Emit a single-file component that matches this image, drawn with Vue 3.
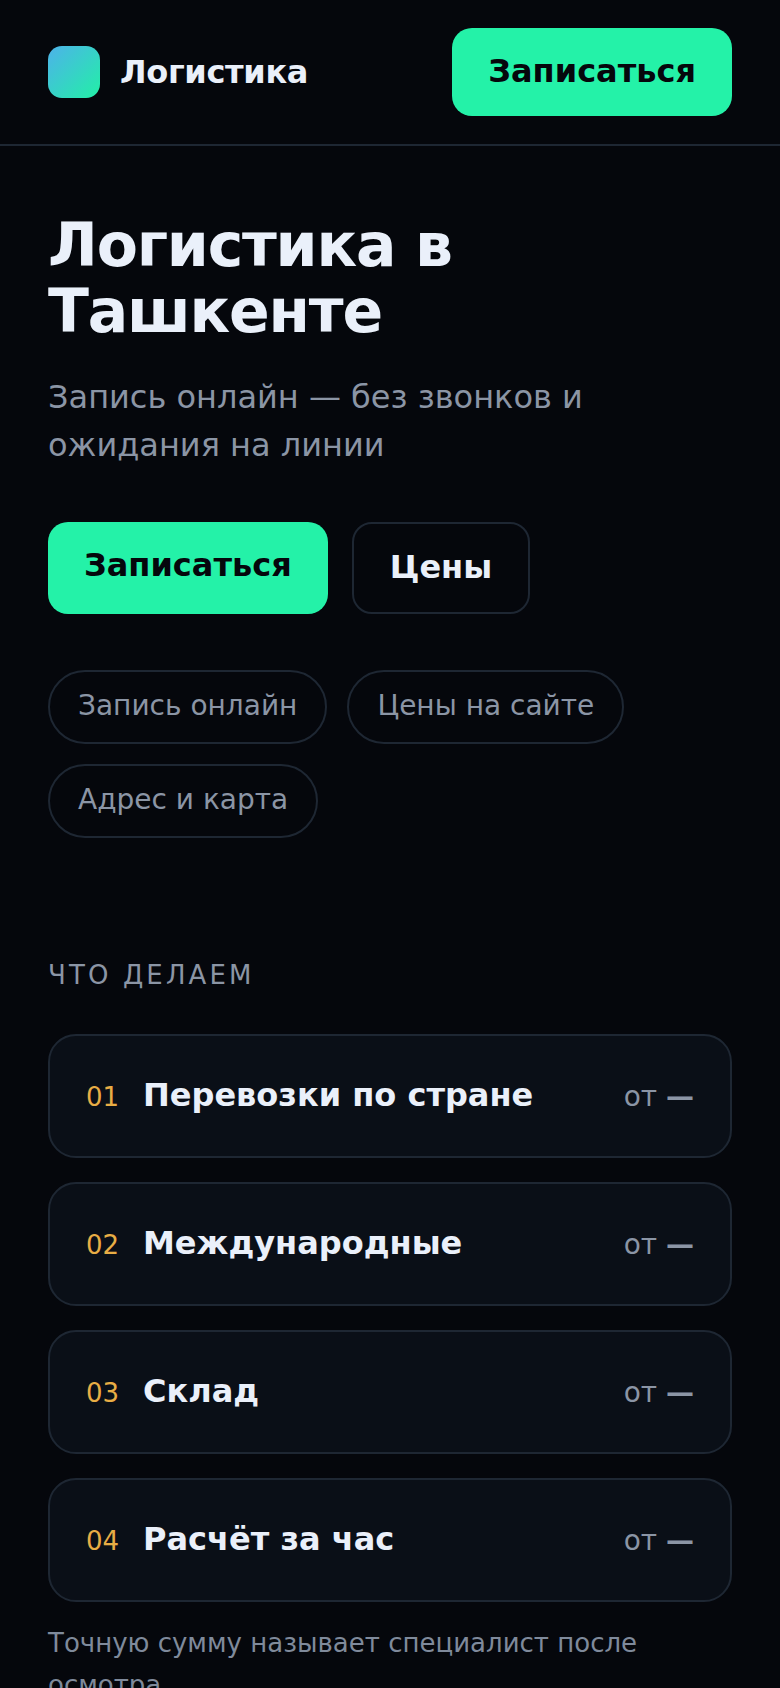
<script setup>
const chips = ["Запись онлайн", "Цены на сайте", "Адрес и карта"];
const services = [
  { num: "01", name: "Перевозки по стране" },
  { num: "02", name: "Международные" },
  { num: "03", name: "Склад" },
  { num: "04", name: "Расчёт за час" },
];
</script>

<template>
  <div class="page">
    <header class="top">
      <div class="brand">
        <span class="logo"></span>
        <span class="brand-name">Логистика</span>
      </div>
      <a class="btn primary">Записаться</a>
    </header>

    <section class="hero">
      <h1>Логистика в Ташкенте</h1>
      <p class="lead">Запись онлайн — без звонков и ожидания на линии</p>
      <div class="actions">
        <a class="btn primary">Записаться</a>
        <a class="btn ghost">Цены</a>
      </div>
      <div class="chips">
        <span v-for="c in chips" :key="c" class="chip">{{ c }}</span>
      </div>
    </section>

    <section class="services">
      <h2>ЧТО ДЕЛАЕМ</h2>
      <div class="list">
        <div v-for="s in services" :key="s.num" class="row">
          <span class="num">{{ s.num }}</span>
          <span class="name">{{ s.name }}</span>
          <span class="price">от <b>—</b></span>
        </div>
      </div>
      <p class="note">Точную сумму называет специалист после осмотра</p>
    </section>
  </div>
</template>

<style>
html,
body {
  margin: 0;
  background: #05070c;
}
</style>

<style scoped>
.page {
  width: 780px;
  height: 1688px;
  overflow: hidden;
  background: #05070c;
  color: #eaf0fa;
  font-family: "DejaVu Sans", sans-serif;
}
.top {
  display: flex;
  align-items: center;
  justify-content: space-between;
  height: 146px;
  padding: 0 48px;
  box-sizing: border-box;
  border-bottom: 2px solid #1e2733;
}
.brand {
  display: flex;
  align-items: center;
  gap: 20px;
}
.logo {
  width: 52px;
  height: 52px;
  border-radius: 14px;
  background: linear-gradient(135deg, #4db2ea, #22f0a6);
}
.brand-name {
  font-size: 32px;
  font-weight: 700;
  letter-spacing: -0.32px;
}
.btn {
  display: block;
  padding: 24px 36px 26px;
  border-radius: 20px;
  font-size: 32px;
  line-height: 38px;
  font-weight: 700;
}
.primary {
  background: #24f2a8;
  color: #05070c;
}
.ghost {
  border: 2px solid #1e2733;
  color: #eaf0fa;
}
.hero {
  padding: 66px 48px 0;
}
h1 {
  margin: 0;
  font-size: 60px;
  line-height: 66px;
  font-weight: 700;
  letter-spacing: -1.2px;
}
.lead {
  margin: 29px 0 0;
  font-size: 32px;
  line-height: 48px;
  color: #8b95a5;
}
.actions {
  display: flex;
  gap: 24px;
  margin-top: 53px;
}
.chips {
  display: flex;
  flex-wrap: wrap;
  gap: 20px;
  margin-top: 56px;
}
.chip {
  display: block;
  padding: 17px 28px 20px;
  border: 2px solid #1e2733;
  border-radius: 37px;
  font-size: 28px;
  line-height: 33px;
  color: #8b95a5;
}
.services {
  padding: 122px 48px 0;
}
h2 {
  margin: 0;
  font-size: 26px;
  font-weight: 400;
  letter-spacing: 3.12px;
  color: #8b95a5;
}
.list {
  display: flex;
  flex-direction: column;
  gap: 24px;
  margin-top: 44px;
}
.row {
  display: flex;
  align-items: baseline;
  height: 124px;
  padding: 40px 36px 0;
  box-sizing: border-box;
  background: #0a0f17;
  border: 2px solid #1e2733;
  border-radius: 28px;
}
.num {
  width: 57px;
  font-size: 26px;
  color: #e8ad45;
}
.name {
  flex: 1;
  font-size: 32px;
  font-weight: 700;
}
.price {
  font-size: 28px;
  color: #8b95a5;
}
.note {
  margin: 21px 0 0;
  font-size: 26px;
  line-height: 41.6px;
  color: #7f8a9b;
}
</style>
